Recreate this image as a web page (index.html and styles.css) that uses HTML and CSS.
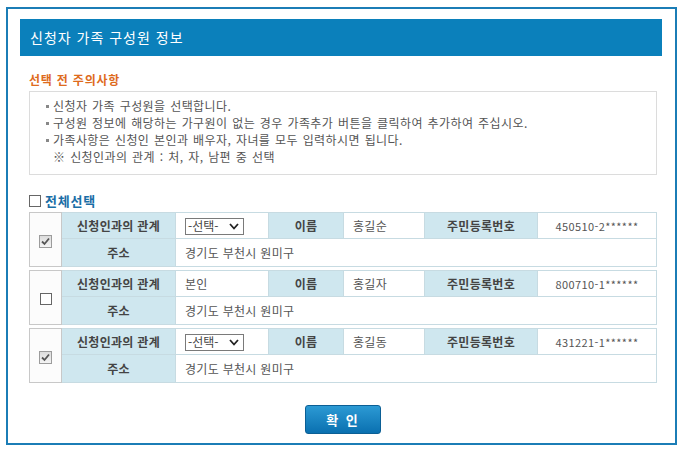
FILE: index.html
```html
<!DOCTYPE html>
<html lang="ko">
<head>
<meta charset="utf-8">
<title>신청자 가족 구성원 정보</title>
<link rel="stylesheet" href="styles.css">
</head>
<body>
<div class="frame">
  <div class="header">신청자 가족 구성원 정보</div>
  <div class="content">
    <h3 class="notice-title">선택 전 주의사항</h3>
    <ul class="notice">
      <li class="dot">신청자 가족 구성원을 선택합니다.</li>
      <li class="dot">구성원 정보에 해당하는 가구원이 없는 경우 가족추가 버튼을 클릭하여 추가하여 주십시오.</li>
      <li class="dot">가족사항은 신청인 본인과 배우자, 자녀를 모두 입력하시면 됩니다.</li>
      <li class="ref">※ 신청인과의 관계 : 처, 자, 남편 중 선택</li>
    </ul>
    <div class="select-all"><span class="cb"></span><span class="sa-label">전체선택</span></div>

    <table class="member">
      <tr class="r1">
        <td class="chk" rowspan="2"><span class="cb checked"><svg viewBox="0 0 11 11" width="11" height="11"><path d="M2 5.5 L4.5 8 L9 2.5" fill="none" stroke="#555" stroke-width="1.8"/></svg></span></td>
        <td class="lbl c1">신청인과의 관계</td>
        <td class="val c2"><span class="sel">-선택-<svg viewBox="0 0 10 7" width="10" height="7"><path d="M1 1 L5 5.5 L9 1" fill="none" stroke="#222" stroke-width="1.8"/></svg></span></td>
        <td class="lbl c3">이름</td>
        <td class="val c4">홍길순</td>
        <td class="lbl c5">주민등록번호</td>
        <td class="val c6 num">450510-2******</td>
      </tr>
      <tr class="r2">
        <td class="lbl">주소</td>
        <td class="val" colspan="5">경기도 부천시 원미구</td>
      </tr>
    </table>

    <table class="member">
      <tr class="r1">
        <td class="chk" rowspan="2"><span class="cb"></span></td>
        <td class="lbl c1">신청인과의 관계</td>
        <td class="val c2">본인</td>
        <td class="lbl c3">이름</td>
        <td class="val c4">홍길자</td>
        <td class="lbl c5">주민등록번호</td>
        <td class="val c6 num">800710-1******</td>
      </tr>
      <tr class="r2">
        <td class="lbl">주소</td>
        <td class="val" colspan="5">경기도 부천시 원미구</td>
      </tr>
    </table>

    <table class="member">
      <tr class="r1">
        <td class="chk" rowspan="2"><span class="cb checked"><svg viewBox="0 0 11 11" width="11" height="11"><path d="M2 5.5 L4.5 8 L9 2.5" fill="none" stroke="#555" stroke-width="1.8"/></svg></span></td>
        <td class="lbl c1">신청인과의 관계</td>
        <td class="val c2"><span class="sel">-선택-<svg viewBox="0 0 10 7" width="10" height="7"><path d="M1 1 L5 5.5 L9 1" fill="none" stroke="#222" stroke-width="1.8"/></svg></span></td>
        <td class="lbl c3">이름</td>
        <td class="val c4">홍길동</td>
        <td class="lbl c5">주민등록번호</td>
        <td class="val c6 num">431221-1******</td>
      </tr>
      <tr class="r2">
        <td class="lbl">주소</td>
        <td class="val" colspan="5">경기도 부천시 원미구</td>
      </tr>
    </table>

    <div class="actions"><button class="btn" type="button">확 인</button></div>
  </div>
</div>
</body>
</html>
```

FILE: styles.css
```css
* { box-sizing: border-box; }
html, body { margin: 0; padding: 0; background: #fff; }
body {
  font-family: "Noto Sans CJK KR", "Noto Sans", sans-serif;
  font-size: 12px;
  color: #555;
}
.frame {
  margin: 7px 0 0 6px;
  width: 671px;
  height: 438px;
  border: 2px solid #1b7db6;
  padding: 10px 13px 0 12px;
}
.header {
  height: 37px;
  background: #0b80bb;
  color: #fff;
  font-size: 14px;
  line-height: 36px;
  padding-left: 10px;
  letter-spacing: 1px;
}
.content {
  margin-left: 9px;
  width: 628px;
}
.notice-title {
  margin: 16px 0 3px;
  font-size: 12px;
  line-height: 16px;
  font-weight: bold;
  color: #de6b1d;
  letter-spacing: 0.8px;
}
.notice {
  list-style: none;
  margin: 0;
  padding: 5px 0 9px 16px;
  border: 1px solid #dcdcdc;
  height: 84px;
}
.notice li {
  line-height: 17px;
  height: 17px;
  color: #555;
  white-space: nowrap;
  letter-spacing: 0.4px;
  word-spacing: 1px;
}
.notice li.dot::before {
  content: "";
  display: inline-block;
  width: 3px;
  height: 3px;
  background: #888;
  margin: 0 4px 3px 0;
  vertical-align: middle;
}
.notice li.ref { padding-left: 7px; }
.select-all {
  margin: 18px 0 3px;
  height: 16px;
  display: flex;
  align-items: center;
  gap: 4px;
}
.sa-label {
  font-size: 13px;
  font-weight: bold;
  color: #1a6ea6;
  line-height: 16px;
  letter-spacing: 0.8px;
}
.cb {
  display: inline-flex;
  align-items: center;
  justify-content: center;
  width: 12px;
  height: 12px;
  border: 1px solid #666;
  background: #fff;
}
.cb.checked {
  width: 13px;
  height: 13px;
  border-color: #9c9c9c;
  background: linear-gradient(#dcdcdc, #f4f4f4);
}
.member {
  width: 627px;
  border-collapse: collapse;
  table-layout: fixed;
  margin-bottom: 3px;
  border: 1px solid #c8c8c8;
}
.member td {
  border: 1px solid #c7dbe2;
  padding: 0;
  white-space: nowrap;
  line-height: 16px;
}
.member tr.r1 td { height: 26px; }
.member tr.r2 td { height: 28px; }
.member td.chk {
  width: 32px;
  text-align: center;
  background: #fcfcfc;
  border-color: #c8c8c8;
}
.member td.chk .cb { vertical-align: middle; }
.member td.lbl {
  background: #cfe7ef;
  text-align: center;
  font-weight: bold;
  color: #444;
  letter-spacing: 0.3px;
}
.member td.val {
  background: #fff;
  padding-left: 9px;
  color: #555;
  letter-spacing: 0.3px;
}
.member td.num {
  text-align: center;
  padding-left: 0;
  padding-right: 0;
  font-size: 11px;
  letter-spacing: 0.4px;
}
.c1 { width: 114px; }
.c2 { width: 93px; }
.c3 { width: 75px; }
.c4 { width: 81px; }
.c5 { width: 113px; }
.c6 { width: 119px; }
.sel {
  display: inline-flex;
  align-items: center;
  justify-content: space-between;
  width: 59px;
  height: 17px;
  border: 1px solid #7a7a7a;
  padding: 0 4px 0 2px;
  color: #444;
  vertical-align: middle;
  background: #fff;
  letter-spacing: 0;
}
.actions {
  margin-top: 22px;
  display: flex;
  justify-content: center;
}
.btn {
  width: 76px;
  height: 29px;
  border: 1px solid #0b5f95;
  border-radius: 3px;
  background: linear-gradient(#2c9ad4, #0a70b0);
  color: #fff;
  font-family: "Noto Sans CJK KR", "Noto Sans", sans-serif;
  font-size: 13px;
  font-weight: bold;
  letter-spacing: 2px;
  padding: 0;
}
```
